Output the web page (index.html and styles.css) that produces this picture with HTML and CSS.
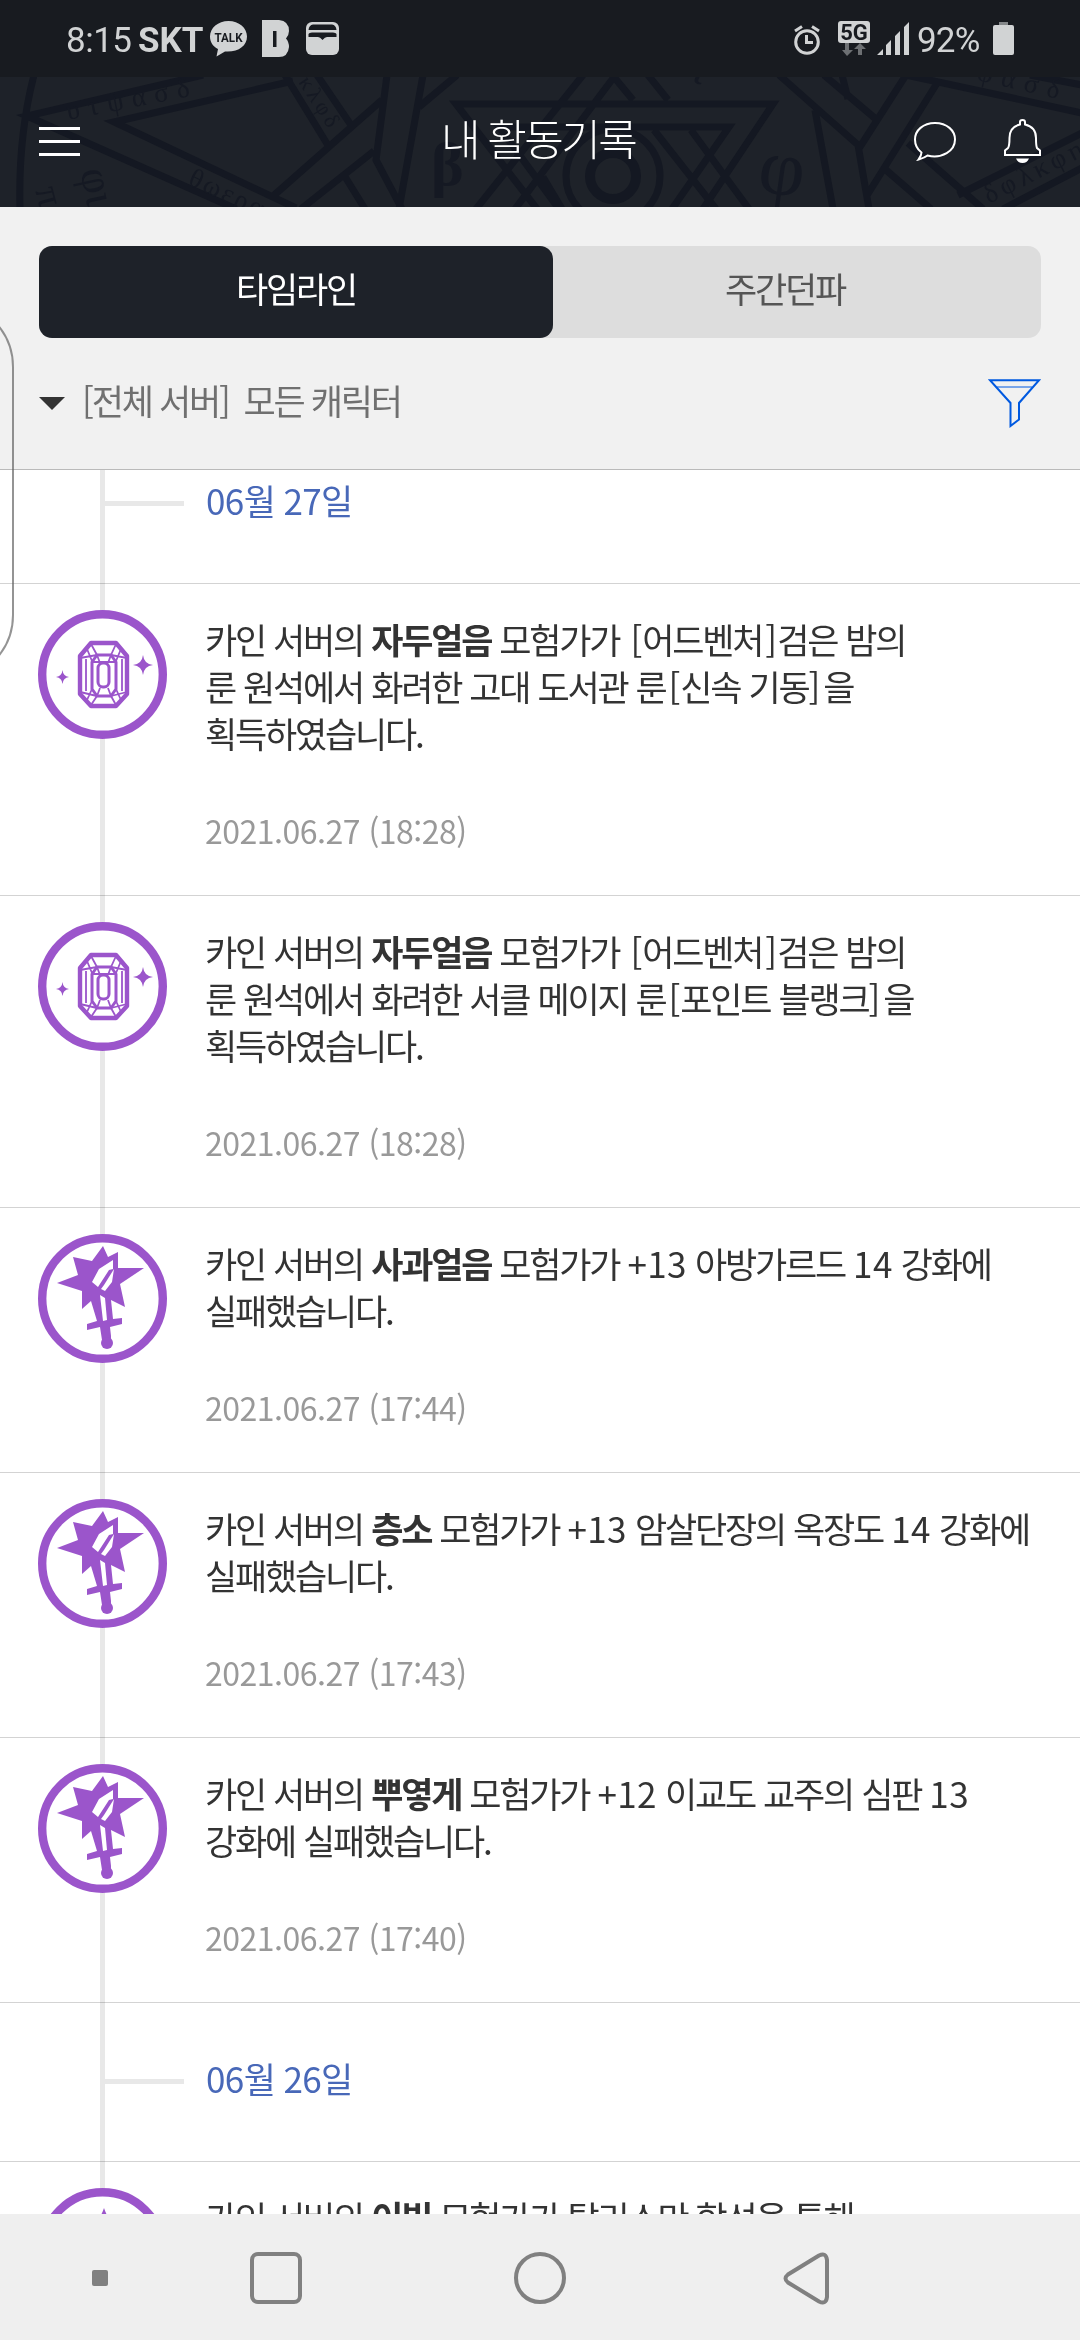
FILE: index.html
```html
<!DOCTYPE html>
<html lang="ko">
<head>
  <meta charset="UTF-8" />
  <meta name="viewport" content="width=device-width, initial-scale=1.0"/>
  <title>내 활동기록</title>
  <link rel="stylesheet" href="styles.css">
</head>
<body>

  <!-- Shared icons -->
  <svg class="defs" width="0" height="0">
    <symbol id="gem" viewBox="0 0 129 129">
      <circle cx="64.5" cy="64.5" r="60.3" fill="#fff" stroke="#9b55cb" stroke-width="8.4"/>
      <g fill="none" stroke="#9b55cb" stroke-linejoin="round">
        <path d="M53 33H78L89 46V84L78 96H53L42 84V46Z" stroke-width="4.4"/>
        <path d="M59 45H73L78 52V79L73 86H59L54 79V52Z" stroke-width="3"/>
        <rect x="60" y="53" width="11" height="24" rx="5" stroke-width="3"/>
        <path d="M53 34L59 45L42 48M78 34L73 45L89 48M53 95L59 86L42 82M78 95L73 86L89 82M49 39L54 51M83 39L78 51M49 90L54 79M83 90L78 79M48 49V81M84 49V81M59 45L62 53M73 45L70 53M59 86L62 78M73 86L70 78M55 52H77" stroke-width="1.8"/>
      </g>
      <path d="M105 45Q106 54 115 55Q106 56 105 65Q104 56 95 55Q104 54 105 45ZM24.500 60Q25 66 31 67Q25 68 24.500 74Q24 68 18 67Q24 66 24.500 60Z" fill="#9b55cb"/>
    </symbol>
    <symbol id="sword" viewBox="0 0 129 129">
      <circle cx="64.5" cy="64.5" r="60.3" fill="#fff" stroke="#9b55cb" stroke-width="8.4"/>
      <path d="M65 12L70 23L80 18L80 34L106 34L82 50L87 73L73 66L75 85L84 84V90L72 93L73 102V106H64L62 93L49 96V90L59 87L53 67L44 75V57L19 49L40 41L35 23L54 27Z" fill="#9b55cb"/>
      <circle cx="69" cy="109" r="6" fill="#9b55cb"/>
      <path d="M75 26L61 35L54 48L60 53L71 36L75 35ZM76 35L66 51L63 55L67 57L74 48ZM62 61L67 64L69 86L65 87Z" fill="#fff"/>
    </symbol>
    <symbol id="talisman" viewBox="0 0 129 129">
      <circle cx="64.5" cy="64.5" r="60.3" fill="#fff" stroke="#9b55cb" stroke-width="8.4"/>
      <path d="M66 20Q69 29 74 34L90 64L66 106L42 64L58 34Q63 29 66 20Z" fill="#9b55cb"/>
    </symbol>
  </svg>

  <div class="statusbar">
    <div class="status-left">
      <span class="clock">8:15</span>
      <b class="carrier">SKT</b>
      <svg class="talk" width="37" height="36" viewBox="0 0 37 36">
        <path d="M18.500 0C8 0 0 7 0 15.500C0 21 3 25.500 8 28L6.500 35.500L15 30.500C28 31.500 37 25 37 15.500C37 7 29 0 18.500 0Z" fill="#d1d3d4"/>
        <text x="18.500" y="20.500" text-anchor="middle" textLength="28" lengthAdjust="spacingAndGlyphs">TALK</text>
      </svg>
      <svg class="bapp" width="27" height="37" viewBox="0 0 27 37">
        <path fill-rule="evenodd" d="M0 0H17Q27 1 27 11Q27 15 24 18.500Q27 22 27 27Q26 37 17 37H0ZM11 11V27H14.500V11Z" fill="#d1d3d4"/>
      </svg>
      <svg width="33" height="33" viewBox="0 0 33 33">
        <rect width="33" height="33" rx="6" fill="#d1d3d4"/>
        <path d="M2.500 8Q3 3 7 2.500H26Q30 3 30.500 8ZM2.500 15V12Q3 10.500 6 10.500H27Q30 10.500 30.500 12V15H21Q19 15 16.500 18Q14 15 12 15Z" fill="#181b20"/>
      </svg>
    </div>
    <div class="status-right">
      <svg class="alarm" width="26" height="30" viewBox="0 0 26 30" fill="none" stroke="#d1d3d4" stroke-width="3">
        <circle cx="13" cy="17" r="11.300"/>
        <path d="M12.500 10V17.500H19M1 6L8 1.500M25 6L18 1.500"/>
      </svg>
      <svg class="net" width="32" height="36" viewBox="0 0 32 36">
        <rect width="32" height="22" rx="3" fill="#d1d3d4"/>
        <text x="16" y="18.500" text-anchor="middle">5G</text>
        <path d="M7 22H11V29H15L9 35L4 29H7ZM20 34H24V28H28L22 22L16 28H20Z" fill="#6d7073"/>
      </svg>
      <svg class="signal" width="32" height="33" viewBox="0 0 32 33" fill="#d1d3d4">
        <path d="M0 33L6 27V33ZM9 23L14 18V33H9ZM18 14L23 9V33H18ZM27 5L32 0V33H27Z"/>
      </svg>
      <span class="percent">92%</span>
      <svg width="21" height="33" viewBox="0 0 21 33">
        <path d="M6 0H15V4H6Z" fill="#85888a"/>
        <rect y="3" width="21" height="30" rx="2" fill="#d1d3d4"/>
      </svg>
    </div>
  </div>

  <header class="header">
    <!-- magic circle pattern -->
    <svg class="pattern" width="1080" height="130" viewBox="0 0 1080 130" fill="none" stroke="#141822" stroke-width="7">
      <path d="M34 -2Q18 60 20 132M203 -2L27 39L236 132M293 4L114 45L296 131M285 -2L329 70M317 -2L351 48M382 23L272 120M374 74L301 132M387 -2L376 83L402 132M423 -2L399 132M457 -2L419 30M344 98L365 132"/>
      <path d="M537 132L456 27H773L703 132M559 132L499 50H729L672 132M583 -2L476 132M633 23L614 0L515 132M648 -2L668 23M654 53L716 132M691 53L749 132M543 100L562 132"/>
      <circle cx="613" cy="99" r="47"/>
      <circle cx="613" cy="99" r="23" stroke-width="10"/>
      <path d="M779 -2L858 68L869 132M824 -2L877 43M842 -2L848 22M815 33L833 132M906 -2L858 73M939 3L866 120M908 66L983 132M886 93L931 132M906 -2L1082 36M1030 -2L1082 8M958 118L1082 56M1003 132L1082 91"/>
      <g class="runes">
        <text transform="translate(68 43) rotate(-11)" font-size="27" textLength="125">υτψασδ</text>
        <text transform="translate(187 107) rotate(25)" font-size="27" textLength="80">θωερα</text>
        <text transform="translate(298 5) rotate(57)" font-size="22" textLength="56">κλφδ</text>
        <text transform="translate(80 94) rotate(78)" font-size="44">φι</text>
        <text transform="translate(35 113) rotate(75)" font-size="38">π</text>
        <text transform="translate(431 108)" font-size="62" font-weight="bold">β</text>
        <text transform="translate(503 -14) rotate(65)" font-size="44">τ</text>
        <text transform="translate(690 3) rotate(25)" font-size="44">ι</text>
        <text transform="translate(756 114) rotate(8)" font-size="80">φ</text>
        <text transform="translate(976 3) rotate(13)" font-size="27" textLength="84">φασδ</text>
        <text transform="translate(989 127) rotate(-27)" font-size="27" textLength="108">δφλκφη</text>
      </g>
    </svg>
    <button class="menu" aria-label="menu"><i></i><i></i><i></i></button>
    <h1>내 활동기록</h1>
    <div class="header-icons">
      <svg width="42" height="39" viewBox="0 0 42 39" fill="none" stroke="#fff" stroke-width="2">
        <path d="M21 1C9 1 1 8.500 1 17.500C1 23 3.500 27.500 7.500 30.500C7.500 33 6 35.500 4.500 37.500C8 36.500 11 35.500 13.500 33.500C28 37 41 29 41 17.500C41 8.500 33 1 21 1Z"/>
      </svg>
      <svg width="37" height="45" viewBox="0 0 37 45" fill="none" stroke="#fff" stroke-width="2">
        <path d="M16 5V3Q16 1 18.500 1T21 3V5.500Q32 8 32 19Q32 27 33 29L36 31.500V36H1V31.500L4 29Q5.500 27 5.500 19Q5.500 8 16 5.500Z"/>
        <path d="M12 39.500H25Q23 44 18.500 44T12 39.500Z" fill="#fff" stroke="none"/>
      </svg>
    </div>
  </header>

  <section class="controls">
    <div class="tabs">
      <button class="active">타임라인</button>
      <button>주간던파</button>
    </div>
    <div class="filter">
      <span class="arrow"></span>
      <span class="filter-text">[전체 서버]&nbsp; 모든 캐릭터</span>
      <svg width="53" height="49" viewBox="0 0 53 49" fill="none" stroke="#0059e0" stroke-width="2">
        <path d="M2 1.200H51L31 24V40.500L22.500 47V24Z"/>
        <path d="M9 8H44" stroke-width="1"/>
      </svg>
    </div>
  </section>

  <main class="content">
    <div class="timeline">
      <div class="date">06월 27일</div>

      <article class="log">
        <svg class="icon"><use href="#gem"/></svg>
        <div>
          <p>카인 서버의 <b>자두얼음</b> 모험가가 <span class="br">[</span>어드벤처<span class="br">]</span>검은 밤의<br>룬 원석에서 화려한 고대 도서관 룬<span class="br">[</span>신속 기동<span class="br end">]</span>을<br>획득하였습니다.</p>
          <time>2021.06.27 (18:28)</time>
        </div>
      </article>

      <article class="log">
        <svg class="icon"><use href="#gem"/></svg>
        <div>
          <p>카인 서버의 <b>자두얼음</b> 모험가가 <span class="br">[</span>어드벤처<span class="br">]</span>검은 밤의<br>룬 원석에서 화려한 서클 메이지 룬<span class="br">[</span>포인트 블랭크<span class="br end">]</span>을<br>획득하였습니다.</p>
          <time>2021.06.27 (18:28)</time>
        </div>
      </article>

      <article class="log">
        <svg class="icon"><use href="#sword"/></svg>
        <div>
          <p>카인 서버의 <b>사과얼음</b> 모험가가 <span class="num">+13</span> 아방가르드 <span class="num">14</span> 강화에<br>실패했습니다.</p>
          <time>2021.06.27 (17:44)</time>
        </div>
      </article>

      <article class="log">
        <svg class="icon"><use href="#sword"/></svg>
        <div>
          <p>카인 서버의 <b>층소</b> 모험가가 <span class="num">+13</span> 암살단장의 옥장도 <span class="num">14</span> 강화에<br>실패했습니다.</p>
          <time>2021.06.27 (17:43)</time>
        </div>
      </article>

      <article class="log">
        <svg class="icon"><use href="#sword"/></svg>
        <div>
          <p>카인 서버의 <b>뿌옇게</b> 모험가가 <span class="num">+12</span> 이교도 교주의 심판 <span class="num">13</span><br>강화에 실패했습니다.</p>
          <time>2021.06.27 (17:40)</time>
        </div>
      </article>

      <div class="date">06월 26일</div>

      <article class="log">
        <svg class="icon"><use href="#talisman"/></svg>
        <div>
          <p>카인 서버의 <b>이빛</b> 모험가가 탈리스만 합성을 통해</p>
        </div>
      </article>
    </div>
  </main>

  <nav class="navbar">
    <span class="dot"></span>
    <span class="recent"></span>
    <span class="home"></span>
    <svg class="back" width="47" height="53" viewBox="0 0 47 53" fill="none" stroke="#808080" stroke-width="4">
      <path d="M36 3.500L5 22.500Q0 26.500 5 30.500L36 49.500Q43 53 44 45V8Q43 0 36 3.500Z"/>
    </svg>
  </nav>

  <div class="edge-handle"></div>

</body>
</html>
```
FILE: styles.css
```css
:root {
  --dark: #1e2229;
  --line: #e8e8e8;
  --border: #d3d3d3;
}

* {
  box-sizing: border-box;
}

body {
  margin: 0;
  width: 1080px;
  height: 2340px;
  display: flex;
  flex-direction: column;
  overflow: hidden;
  background: #fff;
  color: #333;
  font-family: 'Noto Sans CJK KR', sans-serif;
  font-size: 35px;
  letter-spacing: -2.2px;
}

svg {
  display: block;
  flex: none;
}

button {
  border: none;
  padding: 0;
  background: transparent;
  font: inherit;
  letter-spacing: inherit;
}

.defs {
  position: absolute;
}

/* Status bar */
.statusbar {
  flex: none;
  height: 77px;
  padding: 0 66px;
  display: flex;
  justify-content: space-between;
  align-items: center;
  background: #181b20;
  color: #d1d3d4;
  font-family: Roboto, sans-serif;
  letter-spacing: 0;
}

.status-left,
.status-right {
  display: flex;
  align-items: center;
}

.clock,
.carrier,
.percent {
  line-height: 40px;
  padding-top: 4px;
}

.clock {
  width: 72px;
  letter-spacing: -0.5px;
}

.carrier {
  width: 72px;
}

.talk text {
  font: bold 12.5px Roboto, sans-serif;
  fill: #181b20;
}

.bapp {
  margin: 0 17px 0 15px;
}

.alarm {
  margin: 3px 18px 0 0;
}

.net text {
  font: bold 22px Roboto, sans-serif;
  fill: #181b20;
}

.signal {
  margin: 0 8px 0 7px;
}

.percent {
  width: 76px;
  letter-spacing: -0.8px;
}

/* Header */
.header {
  flex: none;
  position: relative;
  height: 130px;
  padding: 0 39px 2px;
  display: flex;
  justify-content: space-between;
  align-items: center;
  background: var(--dark);
}

.pattern {
  position: absolute;
  top: 0;
  left: 0;
}

.runes text {
  fill: #151923;
  stroke: none;
  font-family: 'Liberation Serif', serif;
  letter-spacing: 0;
}

.menu {
  position: relative;
  width: 41px;
  display: flex;
  flex-direction: column;
  gap: 10px;
}

.menu i {
  height: 3px;
  background: #fff;
}

.header h1 {
  position: relative;
  margin: -8px 0 0 82px;
  color: #fff;
  font-size: 43px;
  font-weight: 300;
  letter-spacing: -2.6px;
}

.header-icons {
  position: relative;
  display: flex;
  align-items: center;
  gap: 48px;
}

/* Tabs and character filter */
.controls {
  flex: none;
  height: 263px;
  padding: 39px;
  background: #f1f1f1;
  border-bottom: 1px solid #bababa;
}

.tabs {
  height: 92px;
  display: flex;
  background: #ddd;
  border-radius: 13px;
}

.tabs button {
  width: 488px;
  padding: 0 24px 9px 0;
  color: #555;
}

.tabs .active {
  width: 514px;
  padding-right: 0;
  background: var(--dark);
  border-radius: 13px;
  color: #fff;
}

.filter {
  margin-top: 40px;
  height: 50px;
  display: flex;
  align-items: center;
}

.arrow {
  border: 13px solid transparent;
  border-top-color: #333;
  border-bottom: 0;
}

.filter-text {
  flex: 1;
  margin: -8px 0 0 17px;
  color: #707070;
  word-spacing: -0.2px;
}

/* Timeline */
.content {
  flex: 1;
  overflow: hidden;
}

.timeline {
  position: relative;
  margin-top: -45px;
}

.timeline::before {
  content: "";
  position: absolute;
  top: 0;
  bottom: 0;
  left: 100px;
  width: 5px;
  background: var(--line);
  mix-blend-mode: multiply;
}

.date {
  height: 159px;
  padding-bottom: 10px;
  display: flex;
  align-items: center;
  border-bottom: 1px solid var(--border);
  color: #4868b8;
  letter-spacing: -0.6px;
  word-spacing: -1px;
}

.date::before {
  content: "";
  width: 79px;
  height: 5px;
  margin: 9px 22px 0 105px;
  background: var(--line);
}

.log {
  display: flex;
  padding: 26px 0 37px 38px;
  border-bottom: 1px solid var(--border);
}

.icon {
  position: relative;
  width: 129px;
  height: 129px;
  margin-right: 38px;
}

.log p {
  margin: 5px 0 49px;
  line-height: 47px;
  white-space: nowrap;
  word-spacing: 0.5px;
}

.br {
  margin-left: 3px;
  letter-spacing: 0;
}

.br.end {
  margin-left: 0;
  letter-spacing: 3px;
}

.num {
  letter-spacing: 0.4px;
}

.log time {
  display: block;
  height: 53px;
  line-height: 50px;
  color: #999;
  font-size: 32px;
  letter-spacing: -0.5px;
}

/* Android navigation */
.navbar {
  flex: none;
  height: 126px;
  padding-top: 2px;
  display: flex;
  align-items: center;
  background: #efefef;
}

.dot {
  width: 16px;
  height: 16px;
  margin-left: 92px;
  border-radius: 2px;
  background: #808080;
}

.recent,
.home {
  width: 52px;
  height: 52px;
  border: 4px solid #808080;
  border-radius: 8px;
}

.recent {
  margin-left: 142px;
}

.home {
  margin-left: 212px;
  border-radius: 50%;
}

.back {
  margin-left: 217px;
}

/* edge panel handle on the left side of the screen */
.edge-handle {
  position: absolute;
  top: 301px;
  left: -150px;
  width: 164px;
  height: 380px;
  border: 2px solid rgba(90, 90, 90, 0.65);
  border-radius: 66px;
}
```
